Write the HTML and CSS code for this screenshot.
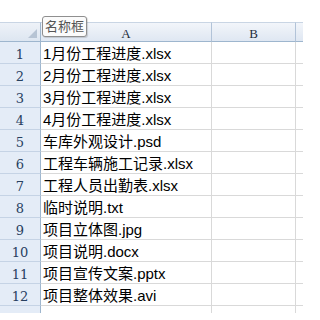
FILE: index.html
```html
<!DOCTYPE html>
<html lang="zh">
<head>
<meta charset="utf-8">
<link rel="stylesheet" href="styles.css">
</head>
<body>
<div class="page">
  <div class="sheet">
    <div class="grid">
      <div class="corner"><span class="tri"></span></div>
      <div class="colhead">A</div>
      <div class="colhead">B</div>
      <div class="colhead last"></div>

      <div class="rowhead">1</div><div class="cell">1月份工程进度.xlsx</div><div class="cell"></div><div class="cell last"></div>
      <div class="rowhead">2</div><div class="cell">2月份工程进度.xlsx</div><div class="cell"></div><div class="cell last"></div>
      <div class="rowhead">3</div><div class="cell">3月份工程进度.xlsx</div><div class="cell"></div><div class="cell last"></div>
      <div class="rowhead">4</div><div class="cell">4月份工程进度.xlsx</div><div class="cell"></div><div class="cell last"></div>
      <div class="rowhead">5</div><div class="cell">车库外观设计.psd</div><div class="cell"></div><div class="cell last"></div>
      <div class="rowhead">6</div><div class="cell">工程车辆施工记录.xlsx</div><div class="cell"></div><div class="cell last"></div>
      <div class="rowhead">7</div><div class="cell">工程人员出勤表.xlsx</div><div class="cell"></div><div class="cell last"></div>
      <div class="rowhead">8</div><div class="cell">临时说明.txt</div><div class="cell"></div><div class="cell last"></div>
      <div class="rowhead">9</div><div class="cell">项目立体图.jpg</div><div class="cell"></div><div class="cell last"></div>
      <div class="rowhead">10</div><div class="cell">项目说明.docx</div><div class="cell"></div><div class="cell last"></div>
      <div class="rowhead">11</div><div class="cell">项目宣传文案.pptx</div><div class="cell"></div><div class="cell last"></div>
      <div class="rowhead">12</div><div class="cell">项目整体效果.avi</div><div class="cell"></div><div class="cell last"></div>
      <div class="rowhead"></div><div class="cell"></div><div class="cell"></div><div class="cell last"></div>
    </div>
  </div>
  <div class="namebox">名称框</div>
</div>
</body>
</html>
```
FILE: styles.css
```css
html, body {
  margin: 0;
  padding: 0;
  background: #ffffff;
}

.page {
  position: relative;
  width: 320px;
  height: 320px;
  padding-top: 22px;
  box-sizing: border-box;
}

.sheet {
  width: 303px;
  height: 291px;
  overflow: hidden;
}

.grid {
  display: grid;
  grid-template-columns: 41px 171px 84px 7px;
  grid-template-rows: 20px repeat(13, 22px);
}

.corner {
  background: linear-gradient(#eef2f8, #dde6f1);
  border-top: 1px solid #c9d5e4;
  border-right: 1px solid #9eb6ce;
  border-bottom: 1px solid #9eb6ce;
  position: relative;
}

.tri {
  position: absolute;
  right: 3px;
  bottom: 3px;
  width: 0;
  height: 0;
  border-left: 9px solid transparent;
  border-bottom: 9px solid #b7c4d4;
}

.colhead {
  background: linear-gradient(#f2f5fa, #dfe7f2);
  border-top: 1px solid #c9d5e4;
  border-right: 1px solid #b2c3d8;
  border-bottom: 1px solid #9eb6ce;
  font-family: "Liberation Serif", "DejaVu Serif", serif;
  font-size: 13px;
  color: #1e2c3c;
  text-align: center;
  line-height: 20px;
  padding-top: 1px;
  box-sizing: border-box;
}

.colhead.last {
  border-right: none;
}

.rowhead {
  background: #e4ecf7;
  border-right: 1px solid #9eb6ce;
  border-bottom: 1px solid #c5d3e5;
  font-family: "DejaVu Serif", "Liberation Serif", serif;
  font-size: 13px;
  color: #27405f;
  text-align: center;
  line-height: 21px;
  padding-top: 2px;
  box-sizing: border-box;
}

.cell {
  border-right: 1px solid #d9d9d9;
  border-bottom: 1px solid #d9d9d9;
  font-family: "Liberation Sans", "Noto Sans CJK SC", sans-serif;
  font-size: 15px;
  color: #000000;
  line-height: 20px;
  padding-top: 2px;
  padding-left: 2px;
  white-space: nowrap;
  overflow: visible;
  box-sizing: border-box;
}

.cell.last {
  border-right: none;
}

.namebox {
  position: absolute;
  left: 42px;
  top: 16px;
  width: 45px;
  height: 21px;
  box-sizing: border-box;
  background: #fbfbfb;
  border: 1px solid #8f8f8f;
  border-radius: 3px;
  box-shadow: 1px 1px 1px rgba(0, 0, 0, 0.15);
  font-family: "Noto Sans CJK SC", sans-serif;
  font-size: 13px;
  color: #555555;
  line-height: 18px;
  text-align: center;
}
```
